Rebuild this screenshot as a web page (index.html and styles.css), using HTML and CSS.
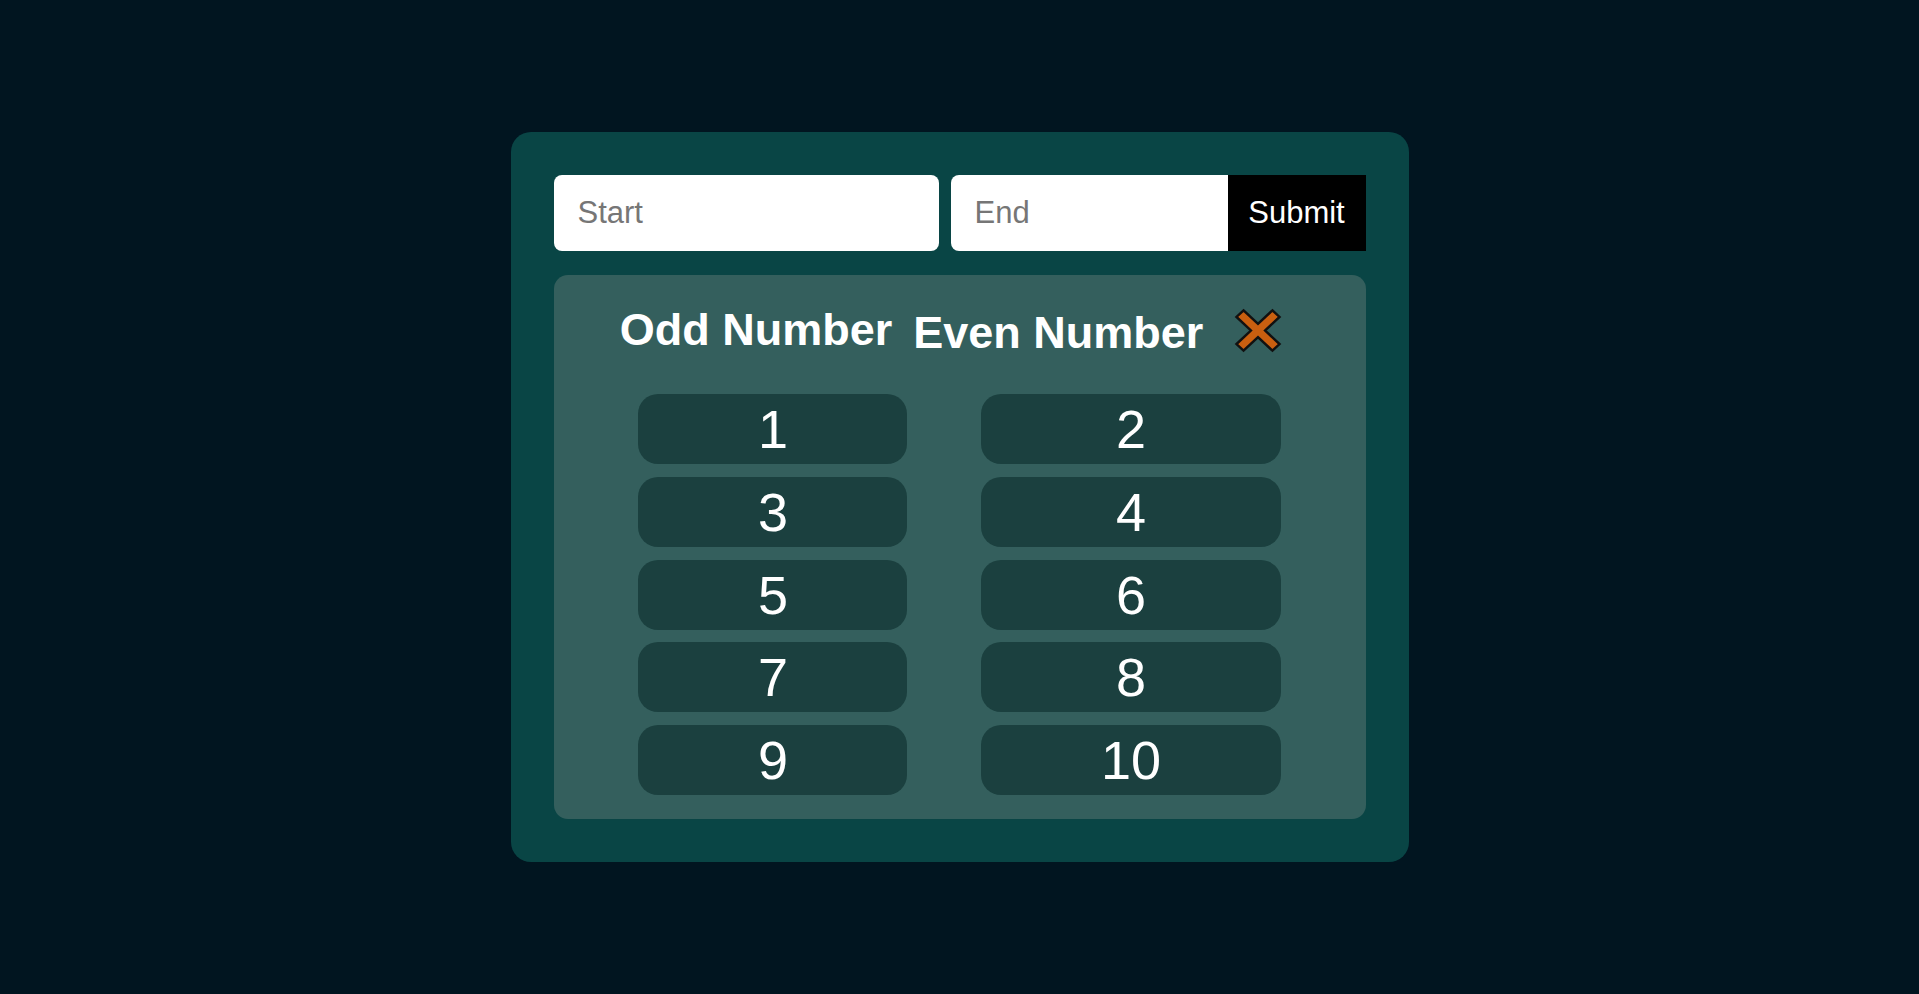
FILE: index.html
```html
<!DOCTYPE html>
<html lang="en">
<head>
<meta charset="utf-8">
<title>Odd / Even Numbers</title>
<link rel="stylesheet" href="styles.css">
</head>
<body>
<main class="card">
  <form class="controls">
    <input class="field field-start" type="text" placeholder="Start">
    <div class="end-group">
      <input class="field field-end" type="text" placeholder="End">
      <button class="submit" type="button">Submit</button>
    </div>
  </form>
  <section class="panel">
    <div class="panel-head">
      <h2 class="heading">Odd Number</h2>
      <h2 class="heading heading-even">Even Number</h2>
      <button class="close" type="button" aria-label="Close">
        <svg class="close-icon" viewBox="0 0 48 48" preserveAspectRatio="none" width="48" height="45">
          <polygon points="9.54,2.46 24,16.93 38.46,2.46 45.54,9.54 31.07,24 45.54,38.46 38.46,45.54 24,31.07 9.54,45.54 2.46,38.46 16.93,24 2.46,9.54" fill="#c95f10" stroke="#111" stroke-width="2.5" stroke-linejoin="miter"/>
        </svg>
      </button>
    </div>
    <div class="columns">
      <div class="column">
        <div class="num">1</div>
        <div class="num">3</div>
        <div class="num">5</div>
        <div class="num">7</div>
        <div class="num">9</div>
      </div>
      <div class="column">
        <div class="num">2</div>
        <div class="num">4</div>
        <div class="num">6</div>
        <div class="num">8</div>
        <div class="num">10</div>
      </div>
    </div>
  </section>
</main>
</body>
</html>
```

FILE: styles.css
```css
* { box-sizing: border-box; }

html, body {
  margin: 0;
  height: 100%;
}

body {
  background: #011520;
  font-family: "Liberation Sans", Arial, sans-serif;
  display: flex;
  align-items: center;
  justify-content: center;
  overflow: hidden;
}

.card {
  width: 898px;
  background: #094545;
  border-radius: 20px;
  padding: 43px;
  display: flex;
  flex-direction: column;
  gap: 24px;
}

.controls {
  display: flex;
  gap: 12px;
  margin: 0;
}

.field {
  height: 76px;
  border: none;
  outline: none;
  background: #fff;
  padding: 0 24px;
  font-family: "Liberation Sans", Arial, sans-serif;
  font-size: 31px;
  color: #222;
}

.field::placeholder { color: #767676; }

.field-start {
  width: 385px;
  border-radius: 8px;
}

.end-group {
  display: flex;
}

.field-end {
  width: 277px;
  border-radius: 8px 0 0 8px;
}

.submit {
  height: 76px;
  border: none;
  background: #000;
  color: #fff;
  padding: 0 20px;
  width: 138px;
  font-family: "Liberation Sans", Arial, sans-serif;
  font-size: 31px;
  border-radius: 0;
}

.panel {
  background: #345f5d;
  border-radius: 14px;
  padding: 29px 0 24px;
  display: flex;
  flex-direction: column;
  align-items: center;
}

.panel-head {
  display: flex;
  align-items: flex-start;
  justify-content: center;
  gap: 21px;
  height: 51px;
  padding-right: 17px;
}

.heading {
  margin: 0;
  color: #fff;
  font-size: 45px;
  line-height: 51px;
  font-weight: 700;
  white-space: nowrap;
}

.heading-even {
  padding-top: 3px;
}

.close {
  background: none;
  border: none;
  padding: 0;
  margin-left: 10px;
  margin-top: 4px;
  width: 48px;
  height: 45px;
  display: flex;
}

.close-icon {
  display: block;
  width: 48px;
  height: 45px;
}

.columns {
  display: flex;
  gap: 74px;
  margin-top: 39px;
}

.column {
  display: flex;
  flex-direction: column;
  gap: 12.7px;
}

.num {
  height: 70px;
  padding: 0 119.5px;
  background: #1b403f;
  border-radius: 20px;
  color: #fff;
  font-size: 54px;
  line-height: 70px;
  text-align: center;
}
```
